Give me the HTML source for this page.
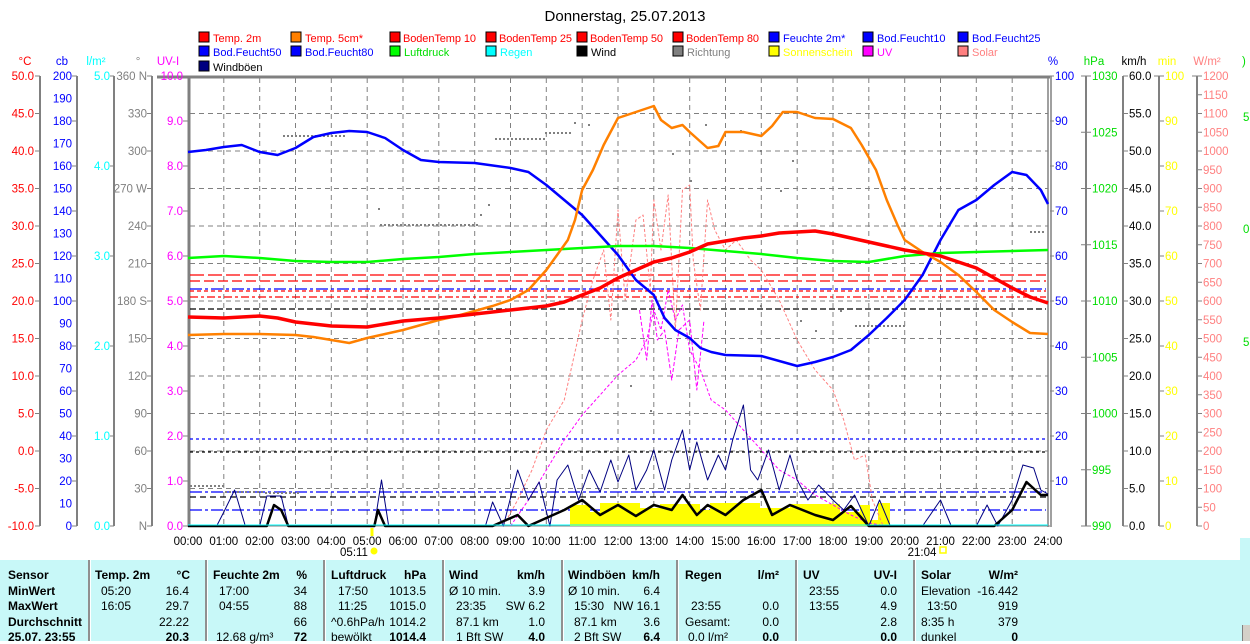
<!DOCTYPE html>
<html><head><meta charset="utf-8"><style>
body{margin:0;width:1250px;height:641px;overflow:hidden;background:#fff;font-family:"Liberation Sans",sans-serif;position:relative}
svg{position:absolute;left:0;top:0}
svg text{font-family:"Liberation Sans",sans-serif;font-size:11.5px}
.tb{position:absolute;left:0;top:560px;width:1240px;height:81px;background:#c8f8f8;font-size:12px;color:#000}
.tb span{position:absolute;white-space:nowrap}
.b{font-weight:bold}
.sep{position:absolute;top:0;width:2px;height:81px;background:#909090;border-right:1px solid #fff}
</style></head><body>
<svg width="1250" height="641" viewBox="0 0 1250 641">
<text x="625" y="21" text-anchor="middle" style="font-size:15px">Donnerstag, 25.07.2013</text>
<!-- legend -->
<g stroke="#000" stroke-width="1">
<rect x="199" y="32" width="10" height="10" fill="#f00"/><rect x="291" y="32" width="10" height="10" fill="#ff8000"/><rect x="390" y="32" width="10" height="10" fill="#f00"/><rect x="486" y="32" width="10" height="10" fill="#f00"/><rect x="577" y="32" width="10" height="10" fill="#f00"/><rect x="673" y="32" width="10" height="10" fill="#f00"/><rect x="769" y="32" width="10" height="10" fill="#00f"/><rect x="863" y="32" width="10" height="10" fill="#00f"/><rect x="958" y="32" width="10" height="10" fill="#00f"/>
<rect x="199" y="46" width="10" height="10" fill="#00f"/><rect x="291" y="46" width="10" height="10" fill="#00f"/><rect x="390" y="46" width="10" height="10" fill="#0f0"/><rect x="486" y="46" width="10" height="10" fill="#0ff"/><rect x="577" y="46" width="10" height="10" fill="#000"/><rect x="673" y="46" width="10" height="10" fill="#808080"/><rect x="769" y="46" width="10" height="10" fill="#ff0"/><rect x="863" y="46" width="10" height="10" fill="#f0f"/><rect x="958" y="46" width="10" height="10" fill="#ff8080"/>
<rect x="199" y="61" width="10" height="10" fill="#000080"/>
</g>
<g style="font-size:11px">
<text x="213" y="42" fill="#f00" style="font-size:11px">Temp. 2m</text><text x="305" y="42" fill="#f00" style="font-size:11px">Temp. 5cm*</text><text x="403" y="42" fill="#f00" style="font-size:11px" textLength="73">BodenTemp 10</text><text x="499" y="42" fill="#f00" style="font-size:11px" textLength="73">BodenTemp 25</text><text x="590" y="42" fill="#f00" style="font-size:11px" textLength="73">BodenTemp 50</text><text x="686" y="42" fill="#f00" style="font-size:11px" textLength="73">BodenTemp 80</text><text x="783" y="42" fill="#00f" style="font-size:11px">Feuchte 2m*</text><text x="877" y="42" fill="#00f" style="font-size:11px">Bod.Feucht10</text><text x="972" y="42" fill="#00f" style="font-size:11px">Bod.Feucht25</text>
<text x="213" y="56" fill="#00f" style="font-size:11px">Bod.Feucht50</text><text x="305" y="56" fill="#00f" style="font-size:11px">Bod.Feucht80</text><text x="404" y="56" fill="#0d0" style="font-size:11px">Luftdruck</text><text x="500" y="56" fill="#0ff" style="font-size:11px">Regen</text><text x="591" y="56" style="font-size:11px">Wind</text><text x="687" y="56" fill="#808080" style="font-size:11px">Richtung</text><text x="783" y="56" fill="#ff0" style="font-size:11px">Sonnenschein</text><text x="877" y="56" fill="#f0f" style="font-size:11px">UV</text><text x="972" y="56" fill="#ff8080" style="font-size:11px">Solar</text>
<text x="213" y="71" style="font-size:11px">Windböen</text>
</g>
<!-- axis titles -->
<text x="25" y="65" fill="#f00" text-anchor="middle">°C</text><text x="62" y="65" fill="#00f" text-anchor="middle">cb</text><text x="96" y="65" fill="#0ff" text-anchor="middle">l/m²</text><text x="138" y="65" fill="#808080" text-anchor="middle">°</text><text x="168" y="65" fill="#f0f" text-anchor="middle">UV-I</text>
<text x="1053" y="65" fill="#00f" text-anchor="middle">%</text><text x="1094" y="65" fill="#0d0" text-anchor="middle">hPa</text><text x="1134" y="65" text-anchor="middle">km/h</text><text x="1167" y="65" fill="#ff0" text-anchor="middle">min</text><text x="1207" y="65" fill="#ff8080" text-anchor="middle">W/m²</text>
<text x="1242" y="65" fill="#0d0">)</text>
<!-- axis lines -->
<g stroke="#808080" stroke-width="2" fill="none">
<path d="M40 76V526M77 76V526M114 76V526M152 76V526M1086 76V526M1123 76V526M1159 76V526M1197 76V526"/>
</g>
<!-- grid -->
<g stroke="#808080" stroke-width="1" stroke-dasharray="5,4" fill="none">
<path d="M223.8 78V526M259.7 78V526M295.5 78V526M331.3 78V526M367.2 78V526M403 78V526M438.8 78V526M474.7 78V526M510.5 78V526M546.3 78V526M582.2 78V526M618 78V526M653.8 78V526M689.7 78V526M725.5 78V526M761.3 78V526M797.2 78V526M833 78V526M868.8 78V526M904.7 78V526M940.5 78V526M976.3 78V526M1012.2 78V526"/>
<path d="M190 113.5H1048M190 151H1048M190 188.5H1048M190 226H1048M190 263.5H1048M190 301H1048M190 338.5H1048M190 376H1048M190 413.5H1048M190 451H1048M190 488.5H1048"/>
</g>
<!-- frame -->
<g stroke="#808080" fill="none">
<path d="M157 77H1050" stroke-width="3"/>
<path d="M189 76V527" stroke-width="3"/>
<path d="M1048 76V527M1051 76V527" stroke-width="1.5"/>
<path d="M188 526H1050" stroke-width="1"/>
</g>
<!-- left ticks/labels -->
<g fill="#f00" text-anchor="end">
<text x="34" y="80">50.0</text><text x="34" y="117.5">45.0</text><text x="34" y="155">40.0</text><text x="34" y="192.5">35.0</text><text x="34" y="230">30.0</text><text x="34" y="267.5">25.0</text><text x="34" y="305">20.0</text><text x="34" y="342.5">15.0</text><text x="34" y="380">10.0</text><text x="34" y="417.5">5.0</text><text x="34" y="455">0.0</text><text x="34" y="492.5">-5.0</text><text x="34" y="530">-10.0</text>
</g>
<g fill="#00f" text-anchor="end">
<text x="72" y="80">200</text><text x="72" y="102.5">190</text><text x="72" y="125">180</text><text x="72" y="147.5">170</text><text x="72" y="170">160</text><text x="72" y="192.5">150</text><text x="72" y="215">140</text><text x="72" y="237.5">130</text><text x="72" y="260">120</text><text x="72" y="282.5">110</text><text x="72" y="305">100</text><text x="72" y="327.5">90</text><text x="72" y="350">80</text><text x="72" y="372.5">70</text><text x="72" y="395">60</text><text x="72" y="417.5">50</text><text x="72" y="440">40</text><text x="72" y="462.5">30</text><text x="72" y="485">20</text><text x="72" y="507.5">10</text><text x="72" y="530">0</text>
</g>
<g fill="#0ff" text-anchor="end">
<text x="110" y="80">5.0</text><text x="110" y="170">4.0</text><text x="110" y="260">3.0</text><text x="110" y="350">2.0</text><text x="110" y="440">1.0</text><text x="110" y="530">0.0</text>
</g>
<g fill="#808080" text-anchor="end">
<text x="147" y="80">360 N</text><text x="147" y="117.5">330</text><text x="147" y="155">300</text><text x="147" y="192.5">270 W</text><text x="147" y="230">240</text><text x="147" y="267.5">210</text><text x="147" y="305">180 S</text><text x="147" y="342.5">150</text><text x="147" y="380">120</text><text x="147" y="417.5">90</text><text x="147" y="455">60</text><text x="147" y="492.5">30</text><text x="147" y="530">N</text>
</g>
<g fill="#f0f" text-anchor="end">
<text x="183" y="80">10.0</text><text x="183" y="125">9.0</text><text x="183" y="170">8.0</text><text x="183" y="215">7.0</text><text x="183" y="260">6.0</text><text x="183" y="305">5.0</text><text x="183" y="350">4.0</text><text x="183" y="395">3.0</text><text x="183" y="440">2.0</text><text x="183" y="485">1.0</text><text x="183" y="530">0.0</text>
</g>
<g stroke="#808080" stroke-width="1">
<path d="M35 76H40M35 113.5H40M35 151H40M35 188.5H40M35 226H40M35 263.5H40M35 301H40M35 338.5H40M35 376H40M35 413.5H40M35 451H40M35 488.5H40M35 526H40"/>
<path d="M72 76H77M72 121H77M72 166H77M72 211H77M72 256H77M72 301H77M72 346H77M72 391H77M72 436H77M72 481H77M72 526H77"/>
<path d="M110 76H114M110 166H114M110 256H114M110 346H114M110 436H114M110 526H114"/>
<path d="M147 76H152M147 113.5H152M147 151H152M147 188.5H152M147 226H152M147 263.5H152M147 301H152M147 338.5H152M147 376H152M147 413.5H152M147 451H152M147 488.5H152M147 526H152"/>
<path d="M183 121H188M183 166H188M183 211H188M183 256H188M183 301H188M183 346H188M183 391H188M183 436H188M183 481H188M183 526H188"/>
<path d="M1050 76H1054M1050 121H1054M1050 166H1054M1050 211H1054M1050 256H1054M1050 301H1054M1050 346H1054M1050 391H1054M1050 436H1054M1050 481H1054"/>
<path d="M1081 76H1091M1081 132.3H1091M1081 188.5H1091M1081 244.8H1091M1081 301H1091M1081 357.3H1091M1081 413.5H1091M1081 469.8H1091M1081 526H1091"/>
<path d="M1123 76H1128M1123 113.5H1128M1123 151H1128M1123 188.5H1128M1123 226H1128M1123 263.5H1128M1123 301H1128M1123 338.5H1128M1123 376H1128M1123 413.5H1128M1123 451H1128M1123 488.5H1128M1123 526H1128"/>
<path d="M1154 76H1164M1159 121H1164M1159 166H1164M1159 211H1164M1159 256H1164M1159 301H1164M1159 346H1164M1159 391H1164M1159 436H1164M1159 481H1164M1159 526H1164"/>
<path d="M1192 76H1202M1197 94.8H1202M1197 113.5H1202M1197 132.3H1202M1197 151H1202M1197 169.8H1202M1197 188.5H1202M1197 207.3H1202M1197 226H1202M1197 244.8H1202M1197 263.5H1202M1197 282.3H1202M1197 301H1202M1197 319.8H1202M1197 338.5H1202M1197 357.3H1202M1197 376H1202M1197 394.8H1202M1197 413.5H1202M1197 432.3H1202M1197 451H1202M1197 469.8H1202M1197 488.5H1202M1197 507.3H1202M1197 526H1202"/>
</g>
<!-- right labels -->
<g fill="#00f">
<text x="1055" y="80">100</text><text x="1055" y="125">90</text><text x="1055" y="170">80</text><text x="1055" y="215">70</text><text x="1055" y="260">60</text><text x="1055" y="305">50</text><text x="1055" y="350">40</text><text x="1055" y="395">30</text><text x="1055" y="440">20</text><text x="1055" y="485">10</text>
</g>
<g fill="#0d0">
<text x="1092" y="80">1030</text><text x="1092" y="136.3">1025</text><text x="1092" y="192.5">1020</text><text x="1092" y="248.8">1015</text><text x="1092" y="305">1010</text><text x="1092" y="361.3">1005</text><text x="1092" y="417.5">1000</text><text x="1092" y="473.8">995</text><text x="1092" y="530">990</text>
<text x="1243" y="121">5</text><text x="1243" y="233">0</text><text x="1243" y="346">5</text>
</g>
<g fill="#000">
<text x="1129" y="80">60.0</text><text x="1129" y="117.5">55.0</text><text x="1129" y="155">50.0</text><text x="1129" y="192.5">45.0</text><text x="1129" y="230">40.0</text><text x="1129" y="267.5">35.0</text><text x="1129" y="305">30.0</text><text x="1129" y="342.5">25.0</text><text x="1129" y="380">20.0</text><text x="1129" y="417.5">15.0</text><text x="1129" y="455">10.0</text><text x="1129" y="492.5">5.0</text><text x="1129" y="530">0.0</text>
</g>
<g fill="#ff0">
<text x="1165" y="80">100</text><text x="1165" y="125">90</text><text x="1165" y="170">80</text><text x="1165" y="215">70</text><text x="1165" y="260">60</text><text x="1165" y="305">50</text><text x="1165" y="350">40</text><text x="1165" y="395">30</text><text x="1165" y="440">20</text><text x="1165" y="485">10</text><text x="1165" y="530">0</text>
</g>
<g fill="#ff8080">
<text x="1203" y="80">1200</text><text x="1203" y="98.8">1150</text><text x="1203" y="117.5">1100</text><text x="1203" y="136.3">1050</text><text x="1203" y="155">1000</text><text x="1203" y="173.8">950</text><text x="1203" y="192.5">900</text><text x="1203" y="211.3">850</text><text x="1203" y="230">800</text><text x="1203" y="248.8">750</text><text x="1203" y="267.5">700</text><text x="1203" y="286.3">650</text><text x="1203" y="305">600</text><text x="1203" y="323.8">550</text><text x="1203" y="342.5">500</text><text x="1203" y="361.3">450</text><text x="1203" y="380">400</text><text x="1203" y="398.8">350</text><text x="1203" y="417.5">300</text><text x="1203" y="436.3">250</text><text x="1203" y="455">200</text><text x="1203" y="473.8">150</text><text x="1203" y="492.5">100</text><text x="1203" y="511.3">50</text><text x="1203" y="530">0</text>
</g>
<!-- horizontal reference lines -->
<g fill="none" stroke-width="1.3">
<path d="M190 275H1046" stroke="#f00" stroke-dasharray="14,4"/>
<path d="M190 281H1046" stroke="#f00" stroke-dasharray="10,4"/>
<path d="M190 289H1046" stroke="#00f" stroke-dasharray="12,3,3,3"/>
<path d="M190 291H1046" stroke="#f00" stroke-dasharray="4,3"/>
<path d="M190 297H1046" stroke="#f00" stroke-dasharray="8,3,3,3"/>
<path d="M190 309H1046" stroke="#000" stroke-dasharray="6,3"/>
<path d="M190 439H1046" stroke="#00f" stroke-dasharray="3,3"/>
<path d="M190 452H1046" stroke="#000" stroke-dasharray="3,3"/>
<path d="M190 492H1046" stroke="#00f" stroke-dasharray="12,3,3,3"/>
<path d="M190 497H1046" stroke="#000" stroke-dasharray="6,4"/>
<path d="M190 510H1046" stroke="#00f" stroke-dasharray="12,3,3,3"/>
</g>
<!-- sunshine -->
<g fill="#ff0">
<path d="M570 526V505H590V512H600V503H640V508H660V504H700V510H710V503H760V508H790V504H840V512H860V505H870V520H878V503H890V526Z"/>
</g>
<!-- direction dots -->
<g stroke="#808080" stroke-width="2" stroke-dasharray="2,2" fill="none">
<path d="M283 136H345M495 139H545M545 133H572M380 225H478M855 326H905M190 486H225M225 492H265M265 493H300M1030 232H1046"/>
</g>
<g fill="#808080">
<rect x="378" y="208" width="2" height="2"/><rect x="480" y="214" width="2" height="2"/><rect x="488" y="204" width="2" height="2"/><rect x="574" y="122" width="2" height="2"/><rect x="588" y="124" width="2" height="2"/><rect x="672" y="153" width="2" height="2"/><rect x="690" y="180" width="2" height="2"/><rect x="705" y="124" width="2" height="2"/><rect x="740" y="130" width="2" height="2"/><rect x="760" y="150" width="2" height="2"/><rect x="780" y="190" width="2" height="2"/><rect x="792" y="160" width="2" height="2"/><rect x="800" y="320" width="2" height="2"/><rect x="815" y="330" width="2" height="2"/><rect x="630" y="385" width="2" height="2"/><rect x="760" y="305" width="2" height="2"/><rect x="840" y="310" width="2" height="2"/><rect x="650" y="410" width="2" height="2"/>
</g>
<!-- data lines -->
<g transform="translate(188,0) scale(35.833,1)" fill="none" stroke-linejoin="round">
<polyline vector-effect="non-scaling-stroke" stroke="#ff8080" stroke-width="1" stroke-dasharray="3,2" points="8.8,526 9.2,500 9.6,470 10,430 10.5,400 11,320 11.3,280 11.6,250 11.8,320 12,210 12.2,300 12.5,220 12.7,215 12.9,290 13,200 13.2,250 13.4,195 13.6,330 13.8,190 14,185 14.1,260 14.3,310 14.5,200 14.7,230 15,250 15.3,240 15.7,260 16,270 16.5,300 17,340 17.5,370 18,390 18.3,420 18.6,460 18.9,455 19.1,500 19.4,526"/>
<polyline vector-effect="non-scaling-stroke" stroke="#f0f" stroke-width="1" stroke-dasharray="3,2" points="9,526 9.5,500 10,470 10.5,440 11,415 11.5,395 12,375 12.5,360 12.8,340 13,310 13.2,330 13.4,290 13.6,320 13.8,305 14,350 14.3,370 14.6,400 15,410 15.5,430 16,450 16.5,470 17,480 17.5,495 18,505 18.5,515 19,523 19.5,526"/>
<polyline vector-effect="non-scaling-stroke" stroke="#f0f" stroke-width="1" stroke-dasharray="4,2" points="12.6,310 12.8,360 12.95,300 13.1,340 13.3,330 13.5,380 13.7,330 14,320 14.2,390 14.4,320"/>
<polyline vector-effect="non-scaling-stroke" stroke="#00f" stroke-width="2.5" points="0,152 0.5,150 1,147 1.5,145 2,152 2.5,155 3,148 3.5,137 4,133 4.5,131 5,132 5.5,138 6,150 6.5,160 7,162 8,163 9,168 9.5,172 10,185 10.5,200 11,215 11.5,235 12,255 12.5,280 13,295 13.3,318 13.6,330 14,338 14.3,348 14.6,352 15,355 16,356 17,366 17.5,362 18,357 18.5,350 19,335 19.5,318 20,300 20.5,275 21,240 21.5,210 22,200 22.5,185 23,172 23.4,175 23.8,190 24,204"/>
<polyline vector-effect="non-scaling-stroke" stroke="#0f0" stroke-width="2.5" points="0,258 1,256 2,258 3,261 4,262 5,262 6,259 7,257 8,254 9,252 10,250 11,248 12,246 13,246 14,248 15,251 16,254 17,258 18,261 19,262 20,256 21,253 22,252 23,251 24,250"/>
<polyline vector-effect="non-scaling-stroke" stroke="#ff8000" stroke-width="2.5" points="0,335 1,334 2,334 3,335 3.5,337 4,340 4.5,343 5,338 5.5,334 6,330 6.5,325 7,320 7.5,316 8,311 8.5,306 9,300 9.5,290 10,270 10.3,255 10.6,240 10.8,220 11,190 11.3,170 11.6,145 12,118 12.5,112 13,106 13.2,120 13.5,128 13.8,125 14,132 14.5,148 14.8,146 15,132 15.5,132 16,136 16.3,126 16.6,112 17,112 17.5,118 18,119 18.5,128 18.8,145 19.2,170 19.5,200 19.8,225 20,240 20.5,252 21,262 21.5,275 22,292 22.5,310 23,322 23.5,333 24,334"/>
<polyline vector-effect="non-scaling-stroke" stroke="#f00" stroke-width="3.5" points="0,317 1,318 2,316 2.5,318 3,322 4,326 5,327 5.5,324 6,321 7,318 8,314 9,310 10,306 10.5,302 11,295 11.5,288 12,278 12.5,270 13,262 13.5,258 14,252 14.5,244 15,241 15.5,238 16,236 16.5,233 17,232 17.5,231 18,234 18.5,238 19,242 19.5,246 20,250 20.5,253 21,256 21.5,262 22,268 22.5,278 23,288 23.5,297 24,303"/>
<polyline vector-effect="non-scaling-stroke" stroke="#000080" stroke-width="1" points="0,526 0.8,526 1,512 1.3,490 1.6,526 2,526 2.2,496 2.6,496 2.8,526 3.5,526 5.2,526 5.4,480 5.6,526 7,526 8.3,526 8.5,502 8.8,526 9.2,470 9.5,500 9.8,482 10.1,526 10.3,480 10.6,465 10.9,500 11.2,470 11.5,492 11.8,460 12,482 12.3,455 12.5,490 12.8,470 13,450 13.3,490 13.5,460 13.8,430 14,470 14.2,442 14.5,480 14.8,455 15,470 15.2,440 15.5,405 15.7,470 15.9,480 16.2,450 16.5,490 16.8,455 17,480 17.3,500 17.6,485 18,500 18.3,510 18.6,495 19,526 19.3,500 19.6,526 20.5,526 21,500 21.3,526 22,526 22.3,505 22.6,526 23,500 23.3,465 23.6,468 23.8,490 24,494"/>
<polyline vector-effect="non-scaling-stroke" stroke="#000" stroke-width="2.5" points="0,526 2.2,526 2.4,505 2.6,510 2.8,526 5.2,526 5.3,510 5.5,526 8.5,526 9.2,515 9.5,526 10.5,510 11,500 11.5,515 12,505 12.5,516 13,505 13.5,510 13.8,495 14.2,515 14.5,505 15,515 15.5,500 16,490 16.3,515 16.8,505 17.5,515 18,520 18.5,506 19,526 22.5,526 23,510 23.4,482 23.8,495 24,495"/>
<polyline vector-effect="non-scaling-stroke" stroke="#0ff" stroke-width="1" points="0,525 24,525"/>
</g>
<path d="M372 528V536" stroke="#ff0" stroke-width="3"/>
<circle cx="374" cy="551" r="3.5" fill="#ff0"/>
<rect x="940" y="547" width="6" height="6" fill="none" stroke="#ff0" stroke-width="1.5"/>
<g text-anchor="middle">
<text x="188" y="545">00:00</text><text x="223.8" y="545">01:00</text><text x="259.7" y="545">02:00</text><text x="295.5" y="545">03:00</text><text x="331.3" y="545">04:00</text><text x="367.2" y="545">05:00</text><text x="403" y="545">06:00</text><text x="438.8" y="545">07:00</text><text x="474.7" y="545">08:00</text><text x="510.5" y="545">09:00</text><text x="546.3" y="545">10:00</text><text x="582.2" y="545">11:00</text><text x="618" y="545">12:00</text><text x="653.8" y="545">13:00</text><text x="689.7" y="545">14:00</text><text x="725.5" y="545">15:00</text><text x="761.3" y="545">16:00</text><text x="797.2" y="545">17:00</text><text x="833" y="545">18:00</text><text x="868.8" y="545">19:00</text><text x="904.7" y="545">20:00</text><text x="940.5" y="545">21:00</text><text x="976.3" y="545">22:00</text><text x="1012.2" y="545">23:00</text><text x="1048" y="545">24:00</text>
<text x="354" y="556">05:11</text><text x="922" y="556">21:04</text>
</g>
</svg>
<div class="tb">
<div class="sep" style="left:88px"></div><div class="sep" style="left:205px"></div><div class="sep" style="left:323px"></div><div class="sep" style="left:442px"></div><div class="sep" style="left:561px"></div><div class="sep" style="left:676px"></div><div class="sep" style="left:795px"></div><div class="sep" style="left:913px"></div>
<span class="b" style="left:8px;top:8px">Sensor</span><span class="b" style="left:8px;top:24px">MinWert</span><span class="b" style="left:8px;top:39px">MaxWert</span><span class="b" style="left:8px;top:55px">Durchschnitt</span><span class="b" style="left:8px;top:70px">25.07. 23:55</span>
<span class="b" style="left:95px;top:8px">Temp. 2m</span><span class="b" style="right:1050px;top:8px">°C</span>
<span style="left:101px;top:24px">05:20</span><span style="right:1051px;top:24px">16.4</span><span style="left:101px;top:39px">16:05</span><span style="right:1051px;top:39px">29.7</span><span style="right:1051px;top:55px">22.22</span><span class="b" style="right:1051px;top:70px">20.3</span>
<span class="b" style="left:213px;top:8px">Feuchte 2m</span><span class="b" style="right:933px;top:8px">%</span>
<span style="left:219px;top:24px">17:00</span><span style="right:933px;top:24px">34</span><span style="left:219px;top:39px">04:55</span><span style="right:933px;top:39px">88</span><span style="right:933px;top:55px">66</span><span style="left:216px;top:70px">12.68 g/m³</span><span class="b" style="right:933px;top:70px">72</span>
<span class="b" style="left:331px;top:8px">Luftdruck</span><span class="b" style="right:814px;top:8px">hPa</span>
<span style="left:338px;top:24px">17:50</span><span style="right:814px;top:24px">1013.5</span><span style="left:338px;top:39px">11:25</span><span style="right:814px;top:39px">1015.0</span><span style="left:331px;top:55px">^0.6hPa/h</span><span style="right:814px;top:55px">1014.2</span><span style="left:331px;top:70px">bewölkt</span><span class="b" style="right:814px;top:70px">1014.4</span>
<span class="b" style="left:449px;top:8px">Wind</span><span class="b" style="right:695px;top:8px">km/h</span>
<span style="left:449px;top:24px">Ø 10 min.</span><span style="right:695px;top:24px">3.9</span><span style="left:456px;top:39px">23:35</span><span style="right:695px;top:39px">SW 6.2</span><span style="left:456px;top:55px">87.1 km</span><span style="right:695px;top:55px">1.0</span><span style="left:456px;top:70px">1 Bft SW</span><span class="b" style="right:695px;top:70px">4.0</span>
<span class="b" style="left:568px;top:8px">Windböen</span><span class="b" style="right:580px;top:8px">km/h</span>
<span style="left:568px;top:24px">Ø 10 min.</span><span style="right:580px;top:24px">6.4</span><span style="left:574px;top:39px">15:30</span><span style="right:580px;top:39px">NW 16.1</span><span style="left:574px;top:55px">87.1 km</span><span style="right:580px;top:55px">3.6</span><span style="left:574px;top:70px">2 Bft SW</span><span class="b" style="right:580px;top:70px">6.4</span>
<span class="b" style="left:685px;top:8px">Regen</span><span class="b" style="right:461px;top:8px">l/m²</span>
<span style="left:691px;top:39px">23:55</span><span style="right:461px;top:39px">0.0</span><span style="left:685px;top:55px">Gesamt:</span><span style="right:461px;top:55px">0.0</span><span style="left:688px;top:70px">0.0 l/m²</span><span class="b" style="right:461px;top:70px">0.0</span>
<span class="b" style="left:803px;top:8px">UV</span><span class="b" style="right:343px;top:8px">UV-I</span>
<span style="left:809px;top:24px">23:55</span><span style="right:343px;top:24px">0.0</span><span style="left:809px;top:39px">13:55</span><span style="right:343px;top:39px">4.9</span><span style="right:343px;top:55px">2.8</span><span class="b" style="right:343px;top:70px">0.0</span>
<span class="b" style="left:921px;top:8px">Solar</span><span class="b" style="right:222px;top:8px">W/m²</span>
<span style="left:921px;top:24px">Elevation</span><span style="right:222px;top:24px">-16.442</span><span style="left:927px;top:39px">13:50</span><span style="right:222px;top:39px">919</span><span style="left:921px;top:55px">8:35 h</span><span style="right:222px;top:55px">379</span><span style="left:921px;top:70px">dunkel</span><span class="b" style="right:222px;top:70px">0</span>
</div>
<div style="position:absolute;left:1240px;top:538px;width:10px;height:103px;background:#c8f8f8"></div>
<div style="position:absolute;left:1242px;top:625px;width:8px;height:16px;background:#d4d0c8;border-left:1px solid #808080"></div>
</body></html>
